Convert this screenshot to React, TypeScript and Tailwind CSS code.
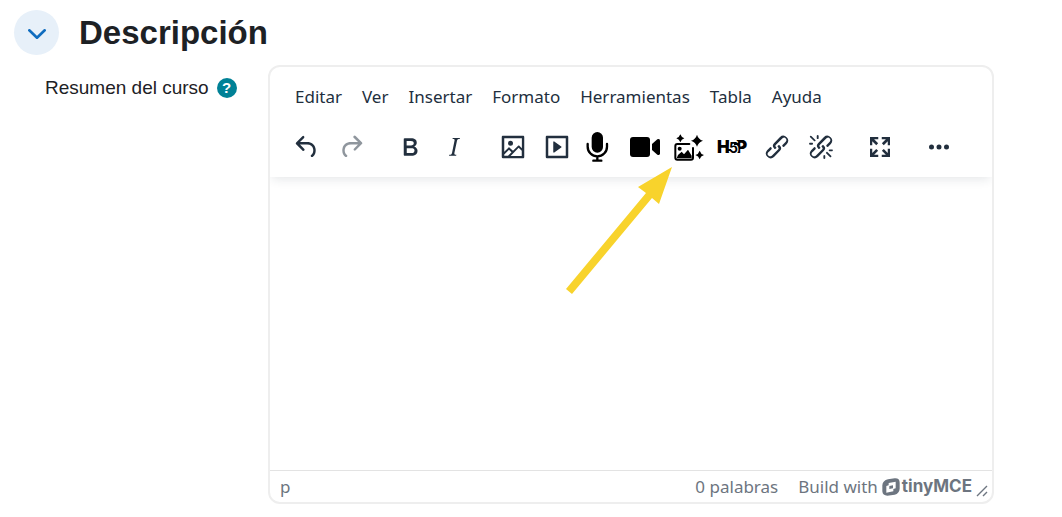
import { useState } from 'react';
import type { ReactNode } from 'react';

const menus = ['Editar', 'Ver', 'Insertar', 'Formato', 'Herramientas', 'Tabla', 'Ayuda'];

const linkPath =
  'M6.2 12.3a1 1 0 0 1 1.4 1.4l-2 2a2 2 0 1 0 2.6 2.8l4.8-4.8a1 1 0 0 0 0-1.4 1 1 0 1 1 1.4-1.3 2.9 2.9 0 0 1 0 4L9.6 20a3.9 3.9 0 0 1-5.5-5.5l2-2Zm11.6-.6a1 1 0 0 1-1.4-1.4l2-2a2 2 0 1 0-2.6-2.8L11 10.3a1 1 0 0 0 0 1.4A1 1 0 1 1 9.6 13a2.9 2.9 0 0 1 0-4L14.4 4a3.9 3.9 0 0 1 5.5 5.5l-2 2Z';

const paths = {
  undo: 'M6.4 8H12c3.7 0 6.2 2 6.8 5.1.6 2.7-.4 5.6-2.3 6.8a1 1 0 0 1-1-1.8c1.1-.6 1.8-2.7 1.4-4.6-.5-2.1-2.1-3.5-4.9-3.5H6.4l3.3 3.3a1 1 0 1 1-1.4 1.4l-5-5a1 1 0 0 1 0-1.4l5-5a1 1 0 0 1 1.4 1.4L6.4 8Z',
  redo: 'M17.6 10H12c-2.8 0-4.4 1.4-4.9 3.5-.4 2 .3 4 1.4 4.6a1 1 0 1 1-1 1.8c-2-1.2-2.9-4.1-2.3-6.8.6-3 3-5.1 6.8-5.1h5.6l-3.3-3.3a1 1 0 1 1 1.4-1.4l5 5a1 1 0 0 1 0 1.4l-5 5a1 1 0 0 1-1.4-1.4l3.3-3.3Z',
  bold: 'M7.8 19c-.3 0-.5 0-.6-.2l-.2-.5V5.7c0-.2 0-.4.2-.5l.6-.2h5c1.5 0 2.7.3 3.5 1 .7.6 1.1 1.4 1.1 2.5a3 3 0 0 1-.6 1.9c-.4.6-1 1-1.6 1.2.4.1.9.3 1.3.6s.8.7 1 1.2c.4.4.5 1 .5 1.6 0 1.3-.4 2.3-1.3 3-.8.7-2.1 1-3.8 1H7.8Zm5-8.3c.6 0 1.2-.1 1.6-.5.4-.3.6-.7.6-1.3 0-1.1-.8-1.7-2.3-1.7H9.3v3.5h3.4Zm.5 6c.7 0 1.3-.1 1.7-.4.4-.4.6-.9.6-1.5s-.2-1-.7-1.4c-.4-.3-1-.4-2-.4H9.4v3.8h4Z',
  italic: 'm16.7 4.7-.1.9h-.3c-.6 0-1 0-1.4.3-.3.3-.4.6-.5 1.1l-2.1 9.8v.6c0 .5.4.8 1.4.8h.2l-.2.8H8l.2-.8h.2c1.1 0 1.8-.5 2-1.5l2-9.8.1-.5c0-.6-.4-.8-1.4-.8h-.3l.2-.9h5.8Z',
  image: 'm5 15.7 3.3-3.2c.3-.3.7-.3 1 0L12 15l4.1-4c.3-.4.8-.4 1 0l2 1.9V5H5v10.7ZM5 18V19h3l2.8-2.9-2-2L5 17.9Zm14-3-2.5-2.4-6.4 6.5H19v-4ZM4 3h16c.6 0 1 .4 1 1v16c0 .6-.4 1-1 1H4a1 1 0 0 1-1-1V4c0-.6.4-1 1-1Zm6 8a2 2 0 1 0 0-4 2 2 0 0 0 0 4Z',
  media: 'M4 3h16c.6 0 1 .4 1 1v16c0 .6-.4 1-1 1H4a1 1 0 0 1-1-1V4c0-.6.4-1 1-1Zm1 2v14h14V5H5Zm4.8 2.6 5.6 4a.5.5 0 0 1 0 .8l-5.6 4A.5.5 0 0 1 9 16V8a.5.5 0 0 1 .8-.4Z',
  link: linkPath,
  unlink:
    linkPath +
    'M7.6 6.3a.8.8 0 0 1-1 1.1L3.3 4.2a.7.7 0 1 1 1-1l3.2 3.1ZM5.1 8.6a.8.8 0 0 1 0 1.5H3a.8.8 0 0 1 0-1.5H5Zm5-3.5a.8.8 0 0 1-1.5 0V3a.8.8 0 0 1 1.5 0V5Zm6 11.8a.8.8 0 0 1 1-1l3.2 3.2a.8.8 0 0 1-1 1L16 17Zm-2.2 2a.8.8 0 0 1 1.5 0V21a.8.8 0 0 1-1.5 0V19Zm5-3.5a.7.7 0 1 1 0-1.5H21a.8.8 0 0 1 0 1.5H19Z',
  fullscreen:
    'M4 4h6.6v1.8H7.3l3.2 3.2L9 10.5 5.8 7.3v3.3H4ZM20 4v6.6h-1.8V7.3L15 10.5 13.5 9l3.2-3.2h-3.3V4ZM4 20v-6.6h1.8v3.3L9 13.5l1.5 1.5-3.2 3.2h3.3V20ZM20 20h-6.6v-1.8h3.3L13.5 15l1.5-1.5 3.2 3.2v-3.3H20Z',
  more: 'M6 10a2 2 0 1 0 0 4 2 2 0 0 0 0-4Zm6 0a2 2 0 1 0 0 4 2 2 0 0 0 0-4Zm6 0a2 2 0 1 0 0 4 2 2 0 0 0 0-4Z',
};

function Glyph({ name }: { name: keyof typeof paths }) {
  return (
    <svg viewBox="0 0 24 24" className="size-[30px]" fill="currentColor" fillRule="evenodd" aria-hidden="true">
      <path d={paths[name]} />
    </svg>
  );
}

function MicIcon() {
  return (
    <svg viewBox="0 0 90 90" className="size-[30px]" fill="#000" aria-hidden="true">
      <rect x="17" y="0" width="34" height="62" rx="17" />
      <path d="M5 36v8a29 29 0 0 0 58 0v-8M34 73v12M22 86h24" fill="none" stroke="#000" strokeWidth="7" strokeLinecap="round" />
    </svg>
  );
}

function VideoIcon() {
  return (
    <svg viewBox="0 0 90 90" className="size-[30px]" fill="#000" aria-hidden="true">
      <rect x="0" y="15" width="60" height="60" rx="9" />
      <path d="M66 36 82 22q8-4 8 4v38q0 8-8 4L66 54Z" />
    </svg>
  );
}

function AiImageIcon() {
  return (
    <svg viewBox="0 0 90 90" className="size-[30px] overflow-visible" fill="#000" aria-hidden="true">
      <path
        d="M46 36H10q-6 0-6 6v35q0 6 6 6h41q6 0 6-6V48"
        fill="none"
        stroke="#000"
        strokeWidth="6"
        strokeLinecap="round"
      />
      <circle cx="17" cy="50" r="6" />
      <path d="M8 79 12 69 23 59l7 8L42 53l11 18v8Z" />
      <path d="M19 7q3 9 12 12-9 3-12 12-3-9-12-12 9-3 12-12Z" />
      <path d="M69 8q4 14 18 18-14 4-18 18-4-14-18-18 14-4 18-18Z" />
      <path d="M77 56q3 10 13 13-10 3-13 13-3-10-13-13 10-3 13-13Z" />
    </svg>
  );
}

function H5pIcon() {
  return (
    <svg viewBox="0 0 32 30" className="h-[30px] w-8 font-['Inter','Liberation_Sans',sans-serif]" fill="#000" aria-hidden="true">
      <text x="0" y="21" fontSize="17" fontWeight="900">H</text>
      <text x="19" y="21" fontSize="17" fontWeight="900">P</text>
      <text x="12" y="21" fontSize="14" fontWeight="700" stroke="#fff" strokeWidth="2" paintOrder="stroke">5</text>
      <path d="M9 17h5v2H9ZM17 11h5v2h-5Z" />
    </svg>
  );
}

function TinyLogo() {
  return (
    <svg viewBox="0 0 54 54" className="mr-0.5 size-[18px]" fill="currentColor" fillRule="evenodd" aria-hidden="true">
      <path d="M18 4 38 1Q53 0 53 14V32Q52 46 38 50L16 53Q2 53 1 40V22Q2 8 18 4ZM20 15 41 11V31L34 33V40L13 44V24L20 22ZM22 24 33 22V31L22 33Z" />
    </svg>
  );
}

function ToolButton({ label, disabled, children }: { label: string; disabled?: boolean; children: ReactNode }) {
  return (
    <button
      type="button"
      aria-label={label}
      title={label}
      disabled={disabled}
      className="flex size-11 items-center justify-center rounded hover:bg-gray-100 disabled:opacity-50"
    >
      {children}
    </button>
  );
}

function Arrow() {
  return (
    <svg
      viewBox="0 0 110 130"
      className="pointer-events-none absolute top-10 right-9 z-10 h-[130px] w-[110px]"
      fill="#f8d32c"
      aria-hidden="true"
    >
      <path d="M107 2 94 39 87 33 7 129 1 124 81 28 73 22Z" />
    </svg>
  );
}

function Editor() {
  const [text, setText] = useState('');
  const words = text.split(/\s+/).filter(Boolean).length;

  return (
    <div className="overflow-hidden rounded-xl border-2 border-[#eeeeee] font-['Noto_Sans',sans-serif] text-[17px] text-[#222f3e]">
      <div className="relative px-[15px] pt-3 pb-2 shadow-[0_4px_10px_-2px_rgba(34,47,62,0.12)]">
        <div role="menubar" className="flex flex-wrap">
          {menus.map((menu) => (
            <button key={menu} type="button" role="menuitem" className="h-9 rounded px-2.5 hover:bg-gray-100">
              {menu}
            </button>
          ))}
        </div>
        <div role="toolbar" className="mt-2.5 flex flex-wrap gap-x-[15px]">
          <div className="flex">
            <ToolButton label="Deshacer"><Glyph name="undo" /></ToolButton>
            <ToolButton label="Rehacer" disabled><Glyph name="redo" /></ToolButton>
          </div>
          <div className="flex">
            <ToolButton label="Negrita"><Glyph name="bold" /></ToolButton>
            <ToolButton label="Cursiva"><Glyph name="italic" /></ToolButton>
          </div>
          <div className="flex">
            <ToolButton label="Imagen"><Glyph name="image" /></ToolButton>
            <ToolButton label="Multimedia"><Glyph name="media" /></ToolButton>
            <ToolButton label="Grabar audio"><MicIcon /></ToolButton>
            <ToolButton label="Grabar vídeo"><VideoIcon /></ToolButton>
            <div className="relative">
              <ToolButton label="Generar imagen con IA"><AiImageIcon /></ToolButton>
              <Arrow />
            </div>
            <ToolButton label="Configurar contenido H5P"><H5pIcon /></ToolButton>
            <ToolButton label="Enlace"><Glyph name="link" /></ToolButton>
            <ToolButton label="Desenlazar"><Glyph name="unlink" /></ToolButton>
          </div>
          <div className="flex">
            <ToolButton label="Pantalla completa"><Glyph name="fullscreen" /></ToolButton>
          </div>
          <div className="flex">
            <ToolButton label="Mostrar más"><Glyph name="more" /></ToolButton>
          </div>
        </div>
      </div>

      <textarea
        id="resumen"
        value={text}
        onChange={(e) => setText(e.target.value)}
        className="block h-[293px] w-full resize-none p-3 outline-none"
      />

      <div className="flex h-8 items-center border-t border-[#e3e3e3] pr-1 pl-2.5 text-[#6d7580]">
        <span className="flex-1">p</span>
        <span className="mr-5">{words} palabras</span>
        <a href="#tiny" className="flex items-center">
          <span className="mr-1">Build with</span>
          <TinyLogo />
          <span className="font-['Inter',sans-serif] text-[17px] font-bold">tinyMCE</span>
        </a>
        <svg viewBox="0 0 12 12" className="mt-2 ml-1 size-3" stroke="currentColor" strokeWidth="1.4" aria-hidden="true">
          <path d="M1 11 11 1M7 11l4-4" />
        </svg>
      </div>
    </div>
  );
}

export default function App() {
  const [open, setOpen] = useState(true);

  return (
    <main className="bg-white pt-2.5 pl-3.5 font-['Liberation_Sans',Arial,sans-serif] text-[#1d2125]">
      <div className="flex items-center gap-5">
        <button
          type="button"
          aria-label="Descripción"
          aria-expanded={open}
          onClick={() => setOpen(!open)}
          className="flex size-[45px] items-center justify-center rounded-full bg-[#e7f0f9] text-[#0f6cbf]"
        >
          <svg viewBox="0 0 18 10" className="mt-0.5 h-2.5 w-[18px]" fill="none" stroke="currentColor" strokeWidth="2.6" strokeLinecap="round" strokeLinejoin="round" aria-hidden="true">
            <path d="M1.3 1.3 9 8.7 16.7 1.3" />
          </svg>
        </button>
        <h3 className="text-[33px] leading-10 font-bold">Descripción</h3>
      </div>

      {open && (
        <div className="mt-2.5 flex pr-[68px]">
          <div className="flex w-[254px] shrink-0 items-start gap-2 pt-[9px] pl-[31px] text-[19px]">
            <label htmlFor="resumen">Resumen del curso</label>
            <button
              type="button"
              aria-label="Ayuda con Resumen del curso"
              className="mt-1 flex size-5 items-center justify-center rounded-full bg-[#008196] text-[15px] font-bold text-white"
            >
              ?
            </button>
          </div>
          <div className="min-w-0 flex-1">
            <Editor />
          </div>
        </div>
      )}
    </main>
  );
}
